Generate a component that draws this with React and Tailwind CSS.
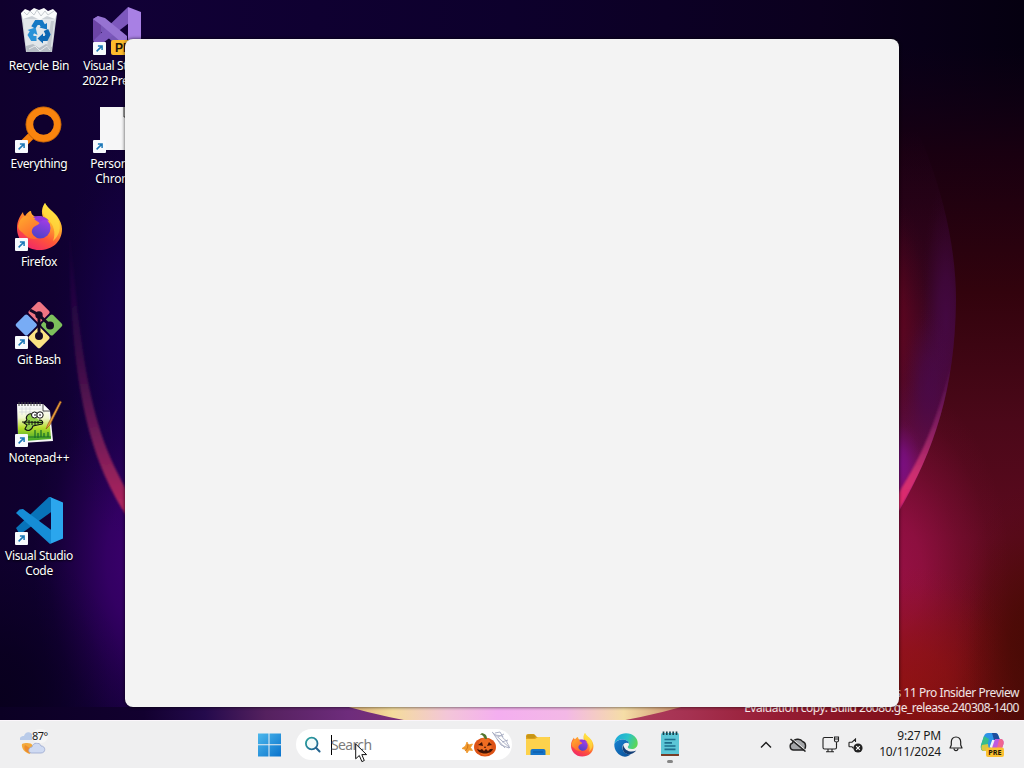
import React from "react";

function Glow({ id, color, opacity = 1 }) {
  return (
    <radialGradient id={id}>
      <stop offset="0" stopColor={color} stopOpacity={opacity} />
      <stop offset="0.3" stopColor={color} stopOpacity={opacity * 0.8} />
      <stop offset="0.6" stopColor={color} stopOpacity={opacity * 0.36} />
      <stop offset="0.85" stopColor={color} stopOpacity={opacity * 0.07} />
      <stop offset="1" stopColor={color} stopOpacity="0" />
    </radialGradient>
  );
}

function Wallpaper() {
  return (
    <svg className="absolute inset-0" width="1024" height="768" viewBox="0 0 1024 768">
      <defs>
        <linearGradient id="base" x1="0" y1="0" x2="1" y2="0">
          <stop offset="0" stopColor="#0f002d" />
          <stop offset="0.12" stopColor="#110036" />
          <stop offset="0.5" stopColor="#0d002c" />
          <stop offset="0.8" stopColor="#0b001e" />
          <stop offset="1" stopColor="#050010" />
        </linearGradient>
        <linearGradient id="redFade" x1="0" y1="0" x2="0" y2="1">
          <stop offset="0.06" stopColor="#140014" stopOpacity="0" />
          <stop offset="0.2" stopColor="#1b0010" stopOpacity="0.9" />
          <stop offset="0.38" stopColor="#32030d" />
          <stop offset="0.55" stopColor="#4b0819" />
          <stop offset="0.7" stopColor="#5c0a1e" />
          <stop offset="0.82" stopColor="#5f0b10" />
          <stop offset="1" stopColor="#560a0a" />
        </linearGradient>
        <linearGradient id="redEdge" x1="870" y1="0" x2="930" y2="0" gradientUnits="userSpaceOnUse">
          <stop offset="0" stopColor="#0c0020" stopOpacity="0" />
          <stop offset="0.3" stopColor="#fff" />
        </linearGradient>
        <linearGradient id="leftRim" x1="0" y1="250" x2="0" y2="515" gradientUnits="userSpaceOnUse">
          <stop offset="0" stopColor="#4a1060" stopOpacity="0.05" />
          <stop offset="0.4" stopColor="#561450" stopOpacity="0.55" />
          <stop offset="0.7" stopColor="#741c58" stopOpacity="0.95" />
          <stop offset="1" stopColor="#b8265e" />
        </linearGradient>
        <linearGradient id="rightBody" x1="0" y1="130" x2="0" y2="515" gradientUnits="userSpaceOnUse">
          <stop offset="0" stopColor="#230220" stopOpacity="0" />
          <stop offset="0.4" stopColor="#33041c" />
          <stop offset="0.65" stopColor="#4a0828" />
          <stop offset="0.82" stopColor="#600c44" />
          <stop offset="1" stopColor="#a01270" />
        </linearGradient>
        <linearGradient id="rightRim" x1="0" y1="360" x2="0" y2="512" gradientUnits="userSpaceOnUse">
          <stop offset="0" stopColor="#702070" stopOpacity="0" />
          <stop offset="0.4" stopColor="#90246a" stopOpacity="0.7" />
          <stop offset="0.75" stopColor="#cc3070" />
          <stop offset="1" stopColor="#e8286c" />
        </linearGradient>
        <linearGradient id="strip" x1="0" y1="0" x2="1024" y2="0" gradientUnits="userSpaceOnUse">
          <stop offset="0" stopColor="#0b0024" />
          <stop offset="0.14" stopColor="#12002f" />
          <stop offset="0.2" stopColor="#240a4c" />
          <stop offset="0.26" stopColor="#55215f" />
          <stop offset="0.34" stopColor="#6e2c7c" />
          <stop offset="0.6" stopColor="#b04060" />
          <stop offset="0.67" stopColor="#a63252" />
          <stop offset="0.76" stopColor="#961c34" />
          <stop offset="0.88" stopColor="#801018" />
          <stop offset="1" stopColor="#480a0a" />
        </linearGradient>
        <linearGradient id="glow" x1="345" y1="0" x2="685" y2="0" gradientUnits="userSpaceOnUse">
          <stop offset="0" stopColor="#dcae74" />
          <stop offset="0.14" stopColor="#f4dc9c" />
          <stop offset="0.3" stopColor="#f3c6d8" />
          <stop offset="0.45" stopColor="#f4aef0" />
          <stop offset="0.65" stopColor="#f3b8e6" />
          <stop offset="0.82" stopColor="#f5dda6" />
          <stop offset="1" stopColor="#c88868" />
        </linearGradient>
        <Glow id="gViolet" color="#430078" opacity={0.85} />
        <Glow id="gBlue" color="#1c0058" opacity={0.75} />
        <Glow id="gNight" color="#07001a" opacity={0.8} />
        <Glow id="gMagenta" color="#a81252" opacity={0.8} />
        <Glow id="gRed" color="#98140f" opacity={0.75} />
        <Glow id="gBrown" color="#420a02" opacity={0.8} />
        <Glow id="gCrimson" color="#78061f" opacity={0.55} />
        <Glow id="gPlum" color="#480a52" opacity={0.65} />
        <Glow id="gOrchid" color="#7c0f8a" opacity={0.85} />
        <filter id="soft" x="-40%" y="-20%" width="180%" height="140%"><feGaussianBlur stdDeviation="1.2" /></filter>
        <clipPath id="rightClip"><path d="M880 60C925 130 956 220 956 300C955 390 934 450 899 511L880 540Z" /></clipPath>
      </defs>
      <rect width="1024" height="768" fill="url(#base)" />
      <rect x="880" width="200" height="768" fill="url(#redFade)" />
      <ellipse cx="138" cy="560" rx="105" ry="210" fill="url(#gViolet)" />
      <ellipse cx="132" cy="340" rx="80" ry="200" fill="url(#gBlue)" />
      <ellipse cx="0" cy="700" rx="130" ry="160" fill="url(#gNight)" />
      <ellipse cx="885" cy="575" rx="125" ry="200" fill="url(#gMagenta)" />
      <ellipse cx="905" cy="685" rx="140" ry="120" fill="url(#gRed)" />
      <ellipse cx="1035" cy="650" rx="80" ry="170" fill="url(#gBrown)" />
      <g clipPath="url(#rightClip)">
        <rect x="870" y="60" width="100" height="480" fill="url(#rightBody)" />
        <ellipse cx="892" cy="320" rx="42" ry="120" fill="url(#gCrimson)" />
        <ellipse cx="946" cy="320" rx="26" ry="140" fill="url(#gPlum)" />
        <ellipse cx="928" cy="385" rx="26" ry="80" fill="url(#gPlum)" />
        <ellipse cx="900" cy="464" rx="24" ry="45" fill="url(#gOrchid)" />
        <path d="M954 350C946 430 927 465 893 520L893 502C918 462 936 430 954 350Z" fill="url(#rightRim)" filter="url(#soft)" />
      </g>
      <path d="M69 240C71 390 90 460 128 518L128 492C98 440 83 390 71 240Z" fill="url(#leftRim)" filter="url(#soft)" />
      <rect y="707" width="899" height="13" fill="url(#strip)" />
      <path d="M345 706Q430 730 512 732Q600 730 685 706Z" fill="url(#glow)" />
    </svg>
  );
}

function Shortcut() {
  return (
    <svg className="absolute bottom-0 left-0" width="13" height="13" viewBox="0 0 13 13">
      <rect width="13" height="13" rx="1" fill="#f7fafd" />
      <path d="M3.6 9.4L8.6 4.4M4.9 3.9H9.1V8.1" fill="none" stroke="#1c78b8" strokeWidth="1.5" />
    </svg>
  );
}

function RecycleBin() {
  return (
    <svg width="48" height="48" viewBox="0 0 48 48">
      <path d="M6 6L42 6L37 45H11Z" fill="#cdd2d8" />
      <path d="M8 12L40 12L36.500 44H11.500Z" fill="#e2e6ea" />
      <path d="M6 6L10 2L15 4L19 1L24 3L29 1L33 4L38 2L42 6L40 12L32 9L25 13L17 9L8 12Z" fill="#fafbfc" />
      <path d="M9 5L12 8L15 4L19 8L22 3L26 9L30 4L33 8L39 4" fill="none" stroke="#c0c5cb" strokeWidth="0.9" />
      <path d="M11 39L18 37L24 41L31 37L37 40L36.500 45H11.500Z" fill="#b7bdc5" />
      <path d="M14 42L20 39L25 44L32 39L35 43" fill="none" stroke="#e6e9ec" strokeWidth="1" />
      <path d="M36 14L39 14L35.500 43L32 39Z" fill="#c3c9cf" />
      <g fill="none" stroke="#1478c4" strokeWidth="4.800">
        <path d="M18.300 20.500L21.500 15.500H26L28 19" />
        <path d="M31 23L33 27.500L31 31.500H26.500" stroke="#0e68b4" />
        <path d="M21.500 31.500H17.500L15.300 28L18 23.500" stroke="#2a92d8" />
      </g>
      <path d="M24.500 20.500L32 16V22.500Z" fill="#1478c4" />
      <path d="M28 26.500V36.500L22.500 31.500Z" fill="#0e68b4" />
      <path d="M12.500 23L20.500 20.500L22.500 28Z" fill="#2a92d8" />
    </svg>
  );
}

function EverythingIcon() {
  return (
    <svg width="48" height="48" viewBox="0 0 48 48">
      <path d="M18 29L7 40" stroke="#f57f0c" strokeWidth="7.500" />
      <circle cx="28.500" cy="19.500" r="14" fill="#0f002e" stroke="#f9840e" strokeWidth="7.400" />
      <circle cx="28.500" cy="19.500" r="17.500" fill="none" stroke="#b85c08" strokeWidth="0.8" />
    </svg>
  );
}

function FirefoxIcon({ size }) {
  const id = "ff" + size;
  return (
    <svg width={size} height={size} viewBox="0 0 48 48">
      <defs>
        <linearGradient id={id + "a"} x1="0.8" y1="0" x2="0.25" y2="1">
          <stop offset="0" stopColor="#fff04c" />
          <stop offset="0.35" stopColor="#ffb02c" />
          <stop offset="0.65" stopColor="#ff5638" />
          <stop offset="1" stopColor="#f0246c" />
        </linearGradient>
        <linearGradient id={id + "b"} x1="0.7" y1="0" x2="0.3" y2="1">
          <stop offset="0" stopColor="#a63ce8" />
          <stop offset="1" stopColor="#4a43c6" />
        </linearGradient>
        <linearGradient id={id + "c"} x1="0" y1="0" x2="0.6" y2="1">
          <stop offset="0" stopColor="#ffac2c" />
          <stop offset="1" stopColor="#ff6a30" />
        </linearGradient>
      </defs>
      <path d="M30 0C33 6 38 8 42 13C45 17 47 22 47 26C47 39 37 47 24.500 47C11 47 2 37 2 25C2 18 5 13 8 9C8 11 9 12 10 13C12 10 14 8 16 8C16 11 18 13 21 14C23 13 26 13 28 14C26 9 27 4 30 0Z" fill={"url(#" + id + "a)"} />
      <path d="M30 0C33 6 39 8 43 16C47 25 44 33 38 38C41 30 39 21 32 16C27 12 27 5 30 0Z" fill="#ffe342" opacity="0.65" />
      <circle cx="25" cy="25" r="10.500" fill={"url(#" + id + "b)"} />
      <path d="M18 14C23 12 31 13 34 18C29 16 27 17 25 19Z" fill="#9136dc" />
      <path d="M3 23C5 15 8 14 10 13C14 13 19 16 24 19.500C26 21.500 20 22 18 25C15 29 18 33 23 35.500C16 37 11 34 8 30C5 28 3 26 3 23Z" fill={"url(#" + id + "c)"} />
    </svg>
  );
}

function GitBashIcon() {
  return (
    <svg width="48" height="48" viewBox="0 0 48 48">
      <g transform="rotate(45 24 24)">
        <rect x="7" y="7" width="16" height="16" rx="2" fill="#ef7583" />
        <rect x="25" y="7" width="16" height="16" rx="2" fill="#7dc05c" />
        <rect x="7" y="25" width="16" height="16" rx="2" fill="#78acf5" />
        <rect x="25" y="25" width="16" height="16" rx="2" fill="#fbe383" />
      </g>
      <path d="M15 9L24 14L34.500 24M24 14V34" fill="none" stroke="#140824" strokeWidth="3" />
      <circle cx="24" cy="14" r="3.700" fill="#140824" />
      <circle cx="35" cy="24.500" r="4" fill="#140824" />
      <circle cx="24" cy="35" r="4" fill="#140824" />
    </svg>
  );
}

function NotepadPlusIcon() {
  return (
    <svg width="48" height="48" viewBox="0 0 48 48">
      <defs>
        <linearGradient id="npp" x1="0" y1="0" x2="0" y2="1">
          <stop offset="0" stopColor="#ffffff" />
          <stop offset="0.3" stopColor="#f2f8d0" />
          <stop offset="0.6" stopColor="#b6dc2a" />
          <stop offset="1" stopColor="#3aa428" />
        </linearGradient>
      </defs>
      <path d="M2 5H28L35 12L38 42L6 44L3 38Z" fill="#f6f6f6" />
      <path d="M3 9H29L34 14L36 40L10 42L3 36Z" fill="url(#npp)" />
      <path d="M4 3V7M7 3V7M10 3V7M13 3V7M16 3V7M19 3V7M22 3V7M25 3V7" stroke="#444" strokeWidth="1" />
      <path d="M4 10H28M4 13H30M7 8V16M11 8V16M15 8V15" stroke="#d0d4d8" strokeWidth="0.7" />
      <path d="M28 5V12H35" fill="#fff" stroke="#222" strokeWidth="0.8" />
      <path d="M17 15C13 14 10 18 12 21L9 24L12 26L10 30C13 33 17 31 18 27L27 25C29 23 27 21 24 21" fill="#92cf49" stroke="#111" strokeWidth="1.100" />
      <circle cx="19.500" cy="16" r="3" fill="#fff" stroke="#111" />
      <circle cx="25" cy="16" r="3.200" fill="#fff" stroke="#111" />
      <path d="M20 15V17M25 15V17M7 23L28 23.500M14 21V26M17 22V26M20 22V26M23 22V25" stroke="#111" strokeWidth="1" />
      <path d="M12 38H36M20 31V39M23 34V39M26 31V38M29 34V38M33 33V38" stroke="#176c2a" strokeWidth="1.200" />
      <path d="M45 2L33 25L31 30L35 26L46.500 3Z" fill="#e8a040" stroke="#8c4a18" strokeWidth="0.6" />
    </svg>
  );
}

function VSCodeIcon() {
  return (
    <svg width="48" height="48" viewBox="0 0 48 48">
      <path d="M1 31L35 -1L39 4V13L7 36H4Z" fill="#0873b9" />
      <path d="M1 16L4.500 12.500L8 12L39 35V44L35 47Z" fill="#168dd6" />
      <path d="M35 0L48 5.500V41.500L35 47C36 46 36 46 36 45V3C36 2 36 1 35 0Z" fill="#2ba6ed" />
    </svg>
  );
}

function VisualStudioIcon() {
  return (
    <svg width="48" height="48" viewBox="0 0 48 48">
      <path d="M0 12L5 9L33 35V46L0 18Z" fill="#7756b5" />
      <path d="M0 12L8 17V29L0 34Z" fill="#6d45a6" />
      <path d="M0 34L35 0L36 16L6 39Z" fill="#7d58bd" />
      <path d="M0 12L5 9L12 11L34 29V40L8 18Z" fill="#9673d2" />
      <path d="M35 0L48 5V42L35 47Z" fill="#a880e4" />
      <rect x="18" y="33" width="30" height="15" rx="2" fill="#fdbb2d" />
      <text x="22" y="45" fontSize="12" fontWeight="700" fill="#1d1608" fontFamily="Liberation Sans, sans-serif">PRE</text>
    </svg>
  );
}

function BlankPageIcon() {
  return (
    <svg width="48" height="48" viewBox="0 0 48 48">
      <path d="M7 2H40V45H7Z" fill="#f6f6f7" />
      <path d="M31 2V12H40" fill="none" stroke="#444" strokeWidth="1" />
    </svg>
  );
}

const desktop = [
  { lines: ["Recycle Bin"], icon: <RecycleBin />, track: "tracking-[-0.25px]" },
  { lines: ["Everything"], icon: <EverythingIcon />, link: true, track: "tracking-[-0.35px]" },
  { lines: ["Firefox"], icon: <FirefoxIcon size={48} />, link: true, track: "tracking-[-0.3px]" },
  { lines: ["Git Bash"], icon: <GitBashIcon />, link: true, track: "tracking-[-0.4px]" },
  { lines: ["Notepad++"], icon: <NotepadPlusIcon />, link: true, track: "tracking-[-0.2px]" },
  { lines: ["Visual Studio", "Code"], icon: <VSCodeIcon />, link: true, track: "tracking-[-0.35px]" },
  { lines: ["Visual Studio", "2022 Preview"], icon: <VisualStudioIcon />, link: true, track: "tracking-[-0.4px]" },
  { lines: ["Personal -", "Chrome"], icon: <BlankPageIcon />, link: true, track: "tracking-[-0.25px]" },
];

function DesktopIcon({ item }) {
  return (
    <div className="flex h-[98px] w-[78px] flex-col items-center pt-[7px]">
      <div className="relative size-12">
        {item.icon}
        {item.link && <Shortcut />}
      </div>
      <div className={"mt-[3px] text-center text-[12px] leading-[15px] whitespace-nowrap text-white [text-shadow:0_1px_2px_#000] " + item.track}>
        {item.lines.map((l) => (
          <div key={l}>{l}</div>
        ))}
      </div>
    </div>
  );
}

function WeatherIcon() {
  return (
    <svg width="28" height="28" viewBox="0 0 28 28">
      <path d="M0 11C-1 8 2 7 4 7C5 3 9 2 12 5V11Z" fill="#b9cbe9" />
      <path d="M2 15C5 14 11 13 13 17L10 25C5 24 1 19 2 15Z" fill="#f3a93c" />
      <path d="M5 16C3 20 6 24 10 24L13 21Z" fill="#ec8b2c" />
      <path d="M11 24C7 23 9 18 12 18C13 13 20 13 21 17C26 17 26 24 21 24Z" fill="#cfdaf2" stroke="#9aa8cf" strokeWidth="0.8" />
    </svg>
  );
}

function StartIcon() {
  return (
    <svg width="24" height="24" viewBox="0 0 24 24">
      <defs>
        <linearGradient id="win" x1="0" y1="0" x2="1" y2="1">
          <stop offset="0" stopColor="#4cb8ec" />
          <stop offset="1" stopColor="#0a72cc" />
        </linearGradient>
      </defs>
      <path d="M1 0.500H11.500V11.300H1ZM12.500 0.500H24V11.300H12.500ZM1 12.300H11.500V23.500H1ZM12.500 12.300H24V23.500H12.500Z" fill="url(#win)" />
    </svg>
  );
}

function SearchIcon() {
  return (
    <svg width="18" height="18" viewBox="0 0 18 18">
      <defs>
        <linearGradient id="srch" x1="0" y1="0" x2="1" y2="1">
          <stop offset="0" stopColor="#2aa59e" />
          <stop offset="1" stopColor="#1c5e92" />
        </linearGradient>
      </defs>
      <circle cx="7.700" cy="7.500" r="5.800" fill="#f2fbfb" stroke="url(#srch)" strokeWidth="1.800" />
      <path d="M12 11.800L15.600 15.500" stroke="#24648f" strokeWidth="2" strokeLinecap="round" />
    </svg>
  );
}

function Halloween() {
  return (
    <svg width="52" height="30" viewBox="0 0 52 30">
      <path d="M7 13L8.500 16L12.500 15L10.500 18.500L12.500 21.500L9 21L7 24L5.500 20.500L2 19.500L5.500 17Z" fill="#f0992c" stroke="#f0992c" strokeWidth="0.8" />
      <path d="M8 15L7.500 19L5 22" stroke="#c56a18" strokeWidth="0.8" fill="none" />
      <ellipse cx="25" cy="18" rx="11" ry="9.500" fill="#dd5316" />
      <ellipse cx="25" cy="17.500" rx="6.500" ry="9" fill="#ee6d22" />
      <path d="M25 10C23 6 22 6 20 5.500L22 4C26 5 27 7 27 10Z" fill="#54752c" />
      <path d="M18 16L22 13L23 17ZM27 17L29 13L32 16ZM24 19L25 17L26 19ZM17 20L20 21L22 20L24 22L26 20L28 22L30 20L33 20C31 26 19 26 17 20Z" fill="#411406" />
      <path d="M32 3L50 19M33 4C36 8 40 5 43 8C42 10 46 10 47 13C46 14 50 16 49 19M33 4L41 16M37 10L45 19M35 4L40 3L43 8M41 16L49 19M38 8L44 5M42 13L48 11" fill="none" stroke="#a4a9bf" strokeWidth="0.9" />
    </svg>
  );
}

function FolderIcon() {
  return (
    <svg width="24" height="24" viewBox="0 0 24 24">
      <path d="M0 3Q0 1 2 1H8L11 4H24V22H0Z" fill="#e0a21c" />
      <path d="M0 6H9L12 4H23Q24 4 24 5V22H0Z" fill="#fdd24c" />
      <ellipse cx="5" cy="3.200" rx="4.500" ry="2" fill="#c59517" />
      <path d="M4.500 22V18Q4.500 16 6.500 16H17.500Q19.500 16 19.500 18V22Z" fill="#1473c8" />
      <path d="M7 19H17" stroke="#0c57a0" />
    </svg>
  );
}

function EdgeIcon() {
  return (
    <svg width="24" height="24" viewBox="0 0 24 24">
      <defs>
        <linearGradient id="edgeTop" x1="0" y1="0.2" x2="1" y2="0.5">
          <stop offset="0" stopColor="#1ca6dc" />
          <stop offset="0.55" stopColor="#2bc3c8" />
          <stop offset="1" stopColor="#5bd657" />
        </linearGradient>
        <linearGradient id="edgeLow" x1="0" y1="0" x2="1" y2="1">
          <stop offset="0" stopColor="#1683d2" />
          <stop offset="1" stopColor="#0b4d96" />
        </linearGradient>
      </defs>
      <path d="M0.300 11C1 4 6 0.300 12 0.300C19 0.300 23.700 5 23.700 10C23.700 14 21 16 17.800 16C15 16 13.800 15 13.800 14C13.800 13.300 15 13 15 11C15 8.500 12 6.600 8.500 6.600C4 6.600 0.800 9 0.300 11Z" fill="url(#edgeTop)" />
      <path d="M0.300 11C2 7.500 6 6.600 8.500 6.600C12 6.600 14.700 8.600 15 10.500C11 8 7.500 12 8.500 16C9.500 20 13.500 22 17 21C15 23 13 23.700 11 23.700C4 23 0 17 0.300 11Z" fill="url(#edgeLow)" />
      <path d="M9.300 12C7.500 15 9 19.500 13 21C16.500 22 20 20 22.300 17.500C17 20 10.500 18 9.300 12Z" fill="#123e76" />
    </svg>
  );
}

function NotepadIcon() {
  return (
    <svg width="20" height="26" viewBox="0 0 20 26">
      <rect x="1" y="2" width="18" height="22" rx="1.500" fill="#5cc6d6" />
      <path d="M1 23H19V24.500Q19 25 18 25H2Q1 25 1 24.500Z" fill="#7a3d26" />
      <path d="M3.500 0.500V4M6.800 0.500V4M10 0.500V4M13.200 0.500V4M16.500 0.500V4" stroke="#17434f" strokeWidth="1.700" />
      <path d="M4.500 8.500H15.500M4.500 11.800H12M4.500 15H15.500M4.500 18.300H15.500" stroke="#1c6d8c" strokeWidth="1.700" />
    </svg>
  );
}

function CopilotIcon() {
  return (
    <svg width="26" height="26" viewBox="0 0 26 26">
      <path d="M8 1H15C17 1 18 2 18.500 4L20 8H13L9 19H4C1 19 0.500 16 1 13L4 4Q5 1 8 1Z" fill="#2d93e8" />
      <path d="M12 1H15C17 1 18 2 18.500 4L20 8H14Z" fill="#1e4d9c" />
      <path d="M4 4L9 7L6 19H4C1 19 0.500 16 1 13Z" fill="#35bd8c" />
      <path d="M2 13L8 12L9 19H4C1 19 1 16 2 13Z" fill="#d9c842" />
      <path d="M15 7H20C23 7 24 9 23.500 12L21 19H9C12 18 12 16 13 13Z" fill="#bd5be0" />
      <path d="M20 7C23 7 24 9 23.500 12L21 19H16L19 8Z" fill="#ef6690" />
      <path d="M13 8L10.500 15" stroke="#eef4fb" strokeWidth="1.600" />
      <rect x="6" y="15.500" width="18" height="9.500" rx="2" fill="#fbc132" />
      <text x="15" y="23" textAnchor="middle" fontSize="7.200" fontWeight="700" fill="#1d1608" fontFamily="Open Sans, sans-serif">PRE</text>
    </svg>
  );
}

function Chevron() {
  return (
    <svg width="12" height="8" viewBox="0 0 12 8">
      <path d="M1 6.500L6 1.500L11 6.500" fill="none" stroke="#1b1b1b" strokeWidth="1.400" />
    </svg>
  );
}

function CloudOff() {
  return (
    <svg width="18" height="14" viewBox="0 0 18 14">
      <path d="M4.500 12C0.500 12 0 6 3.500 5C4.500 0.500 11.500 0 13.500 3.500C17.500 4.500 17.500 11 14 12Z" fill="#a4a6a9" stroke="#222" strokeWidth="1.400" />
      <path d="M2.800 0.600L17 12.400" stroke="#f0f0f0" strokeWidth="1" />
      <path d="M1.500 1L16.500 13.500" stroke="#222" strokeWidth="1.500" />
    </svg>
  );
}

function Network() {
  return (
    <svg width="18" height="17" viewBox="0 0 18 17">
      <path d="M11 1.500H2.500Q1 1.500 1 3V11.500Q1 13 2.500 13H13Q14.500 13 14.500 11.500V8" fill="none" stroke="#222" strokeWidth="1.100" />
      <path d="M6 13V15.500M10 13V15.500M4 15.700H12" stroke="#222" strokeWidth="1.100" />
      <path d="M12.500 1H16.500V4.500Q16.500 6 14.500 6Q12.500 6 12.500 4.500ZM12.500 3H16.500M14.500 6V9" fill="none" stroke="#222" strokeWidth="1.100" />
    </svg>
  );
}

function Muted() {
  return (
    <svg width="15" height="15" viewBox="0 0 15 15">
      <path d="M7.500 4V1L4 4.200H1.500Q1 4.200 1 5V8Q1 8.800 1.500 8.800H4L5.500 10.300" fill="none" stroke="#222" strokeWidth="1.100" />
      <circle cx="10" cy="10" r="4.600" fill="#222" />
      <path d="M8.200 8.200L11.800 11.800M11.800 8.200L8.200 11.800" stroke="#fff" strokeWidth="1.100" />
    </svg>
  );
}

function Bell() {
  return (
    <svg width="14" height="16" viewBox="0 0 14 16">
      <path d="M7 1C4 1 2.300 3.200 2.300 6V9L1 12H13L11.700 9V6C11.700 3.200 10 1 7 1Z" fill="none" stroke="#222" strokeWidth="1.200" strokeLinejoin="round" />
      <path d="M5 12.500Q5.200 14.700 7 14.700Q8.800 14.700 9 12.500" fill="none" stroke="#222" strokeWidth="1.200" />
    </svg>
  );
}

function Pointer() {
  return (
    <svg className="absolute top-[743px] left-[355px]" width="13" height="20" viewBox="0 0 13 20">
      <path d="M0.700 1V15.800L4.300 12.500L6.900 18.600L9.300 17.500L6.800 11.600H11.600Z" fill="#fff" stroke="#111" strokeWidth="1" />
    </svg>
  );
}

function Taskbar() {
  return (
    <div className="flex h-12 items-center border-t border-[#fbf6fb] bg-[#efeff0] text-[#1b1b1b]">
      <div className="flex h-8 w-[257px] items-start pl-5">
        <WeatherIcon />
        <div className="-ml-4 h-3.5 rounded-full bg-[#f6f6f6] text-[11px] leading-[14px] tracking-[-0.5px]">87°</div>
      </div>
      <StartIcon />
      <div className="ml-[15px] flex h-[31px] w-[216px] items-center rounded-full bg-white pl-2">
        <SearchIcon />
        <div className="ml-[9px] h-5 w-px bg-black" />
        <span className="-ml-px text-[14px] leading-5 tracking-[-0.65px] text-[#7b7b7b]">Search</span>
        <div className="ml-auto -mt-0.5"><Halloween /></div>
      </div>
      <div className="ml-3.5 flex items-center">
        <FolderIcon />
        <div className="ml-5"><FirefoxIcon size={24} /></div>
        <div className="ml-5"><EdgeIcon /></div>
        <div className="ml-[22px] flex flex-col items-center pt-1">
          <NotepadIcon />
          <div className="mt-[3px] h-[3px] w-1.5 rounded-full bg-[#858585]" />
        </div>
      </div>
      <div className="ml-auto flex items-center pr-[18px]">
        <Chevron />
        <div className="ml-[17px]"><CloudOff /></div>
        <div className="ml-[15px]"><Network /></div>
        <div className="ml-[8px] mt-0.5"><Muted /></div>
        <div className="-mt-0.5 ml-[15px] w-[63px] text-right text-[12px] leading-4 tracking-[-0.2px]">
          <div>9:27 PM</div>
          <div>10/11/2024</div>
        </div>
        <div className="ml-[8px] -mt-0.5"><Bell /></div>
        <div className="ml-[17px]"><CopilotIcon /></div>
      </div>
    </div>
  );
}

export default function App() {
  return (
    <div className="relative flex h-[768px] w-[1024px] flex-col overflow-hidden bg-[#10002f] font-['Noto_Sans','Open_Sans',sans-serif]">
      <Wallpaper />
      <div className="relative flex h-[720px] justify-between">
        <div className="grid h-[588px] grid-flow-col grid-rows-6">
          {desktop.map((item) => (
            <DesktopIcon key={item.lines.join(" ")} item={item} />
          ))}
        </div>
        <div className="flex flex-col justify-end pr-[5px] pb-[5px] text-right text-[12px] leading-[15px] whitespace-nowrap text-white/90">
          <div className="tracking-[-0.45px]">Windows 11 Pro Insider Preview</div>
          <div className="tracking-[-0.48px]">Evaluation copy. Build 26080.ge_release.240308-1400</div>
        </div>
        <div className="absolute top-[39px] left-[125px] h-[668px] w-[774px] rounded-lg bg-[#f3f3f3] shadow-[0_0_3px_1px_rgba(0,0,0,0.45)]" />
      </div>
      <div className="relative"><Taskbar /></div>
      <Pointer />
    </div>
  );
}
